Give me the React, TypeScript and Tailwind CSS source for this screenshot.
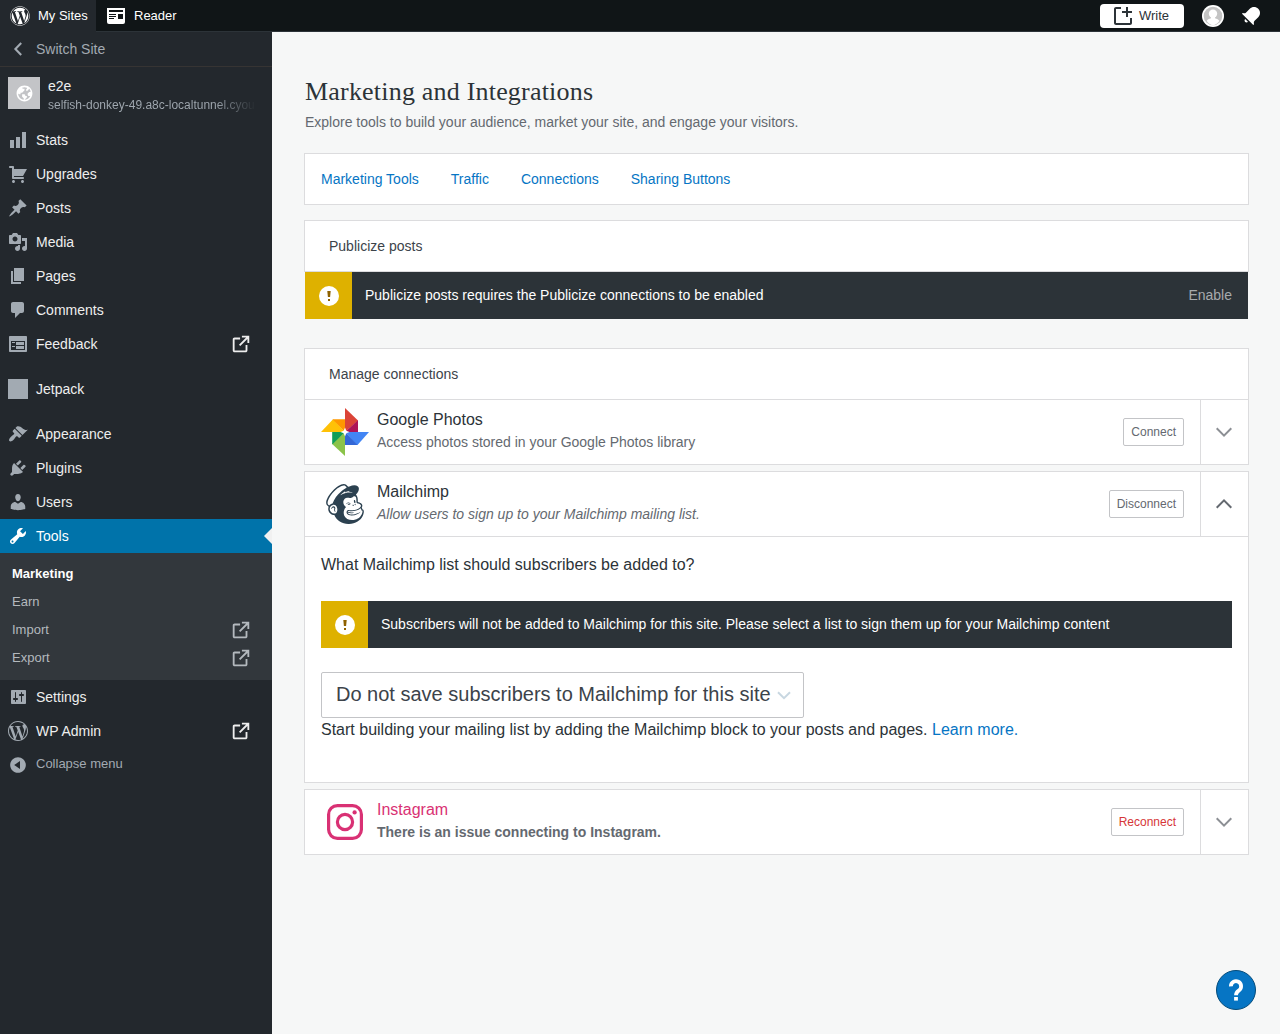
import React from 'react';
import { FaWordpress } from 'react-icons/fa';
import { SiMailchimp, SiWordpress } from 'react-icons/si';

const ICONS = {
  stats: 'M18 18V2h-4v16h4zm-6 0V7H8v11h4zm-6 0v-8H2v8h4z',
  cart: 'M6 13h9c.55 0 1 .45 1 1s-.45 1-1 1H5c-.55 0-1-.45-1-1V4H2c-.55 0-1-.45-1-1s.45-1 1-1h3c.55 0 1 .45 1 1v2h13l-4 7H6v1zm-.5 3c.83 0 1.5.67 1.5 1.5S6.33 19 5.5 19 4 18.33 4 17.5 4.67 16 5.5 16zm9 0c.83 0 1.5.67 1.5 1.5s-.67 1.5-1.5 1.5-1.5-.67-1.5-1.5.67-1.5 1.5-1.5z',
  pin: 'M10.44 3.02l1.82-1.82 6.36 6.35-1.83 1.82c-1.05-.68-2.48-.57-3.41.36l-.75.75c-.92.93-1.04 2.35-.35 3.41l-1.83 1.82-2.41-2.41-2.8 2.79c-.42.42-3.38 2.71-3.8 2.29s1.86-3.39 2.28-3.81l2.79-2.79L4.1 9.36l1.83-1.82c1.05.69 2.48.57 3.4-.36l.75-.75c.93-.92 1.05-2.35.36-3.41z',
  media: 'M13 11V4c0-.55-.45-1-1-1h-1.67L9 1H5L3.67 3H2c-.55 0-1 .45-1 1v7c0 .55.45 1 1 1h10c.55 0 1-.45 1-1zM7 4.5c1.38 0 2.5 1.12 2.5 2.5S8.38 9.5 7 9.5 4.5 8.38 4.5 7 5.62 4.5 7 4.5zM14 6h5v10.5c0 1.38-1.12 2.5-2.5 2.5S14 17.88 14 16.5s1.12-2.5 2.5-2.5c.17 0 .34.02.5.05V9h-3V6zm-4 8.05V13h2v3.5c0 1.38-1.12 2.5-2.5 2.5S7 17.88 7 16.5 8.12 14 9.5 14c.17 0 .34.02.5.05z',
  pages: 'M6 15V2h10v13H6zm-1 1h8v2H3V5h2v11z',
  comments: 'M5 2h9c1.1 0 2 .9 2 2v7c0 1.1-.9 2-2 2h-2l-5 5v-5H5c-1.1 0-2-.9-2-2V4c0-1.1.9-2 2-2z',
  feedback: 'M2 2h16c.55 0 1 .45 1 1v14c0 .55-.45 1-1 1H2c-.55 0-1-.45-1-1V3c0-.55.45-1 1-1zm15 14V7H3v9h14zM4 8v1h3V8H4zm4 0v3h8V8H8zm-4 4v1h3v-1H4zm4 0v3h8v-3H8z',
  appearance: 'M14.48 11.06L7.41 3.99l1.5-1.5c.5-.56 2.3-.47 3.51.32 1.21.8 1.43 1.28 2.91 2.1 1.18.64 2.45 1.26 4.45.85zm-.71.71L6.7 4.7 4.93 6.47c-.39.39-.39 1.02 0 1.41l1.06 1.06c.39.39.39 1.03 0 1.42-.6.6-1.43 1.11-2.21 1.69-.35.26-.7.53-1.01.84C1.43 14.23.4 16.08 1.4 17.07c.99 1 2.84-.03 4.18-1.36.31-.31.58-.66.85-1.02.57-.78 1.08-1.61 1.69-2.21.39-.39 1.02-.39 1.41 0l1.06 1.06c.39.39 1.02.39 1.41 0z',
  plugins: 'M13.11 4.36L9.87 7.6 8 5.73l3.24-3.24c.35-.34 1.05-.2 1.56.32.52.51.66 1.21.31 1.55zm-8 1.77l.91-1.12 9.01 9.01-1.19.84c-.71.71-2.63 1.16-3.82 1.16H6.14L4.9 17.26c-.59.59-1.54.59-2.12 0-.59-.58-.59-1.53 0-2.12l1.24-1.24v-3.88c0-1.13.4-3.19 1.09-3.89zm7.26 3.97l3.24-3.24c.34-.35 1.04-.21 1.55.31.52.51.66 1.21.31 1.55l-3.24 3.25z',
  users: 'M10 9.25c-2.27 0-2.73-3.44-2.73-3.44C7 4.02 7.82 2 9.97 2c2.16 0 2.98 2.02 2.71 3.81 0 0-.41 3.44-2.68 3.44zm0 2.57L12.72 10c2.39 0 4.52 2.33 4.52 4.53v2.49s-3.65 1.13-7.24 1.13c-3.65 0-7.24-1.13-7.24-1.13v-2.49c0-2.25 1.94-4.48 4.47-4.48z',
  tools: 'M16.68 9.77c-1.34 1.34-3.3 1.67-4.95.99l-5.41 6.52c-.99.99-2.59.99-3.58 0s-.99-2.59 0-3.57l6.52-5.42c-.68-1.65-.35-3.61.99-4.95 1.28-1.28 3.12-1.62 4.72-1.06l-2.89 2.89 2.82 2.82 2.86-2.87c.53 1.58.18 3.39-1.08 4.65zM3.81 16.21c.4.39 1.04.39 1.43 0 .4-.4.4-1.04 0-1.43-.39-.4-1.03-.4-1.43 0-.39.39-.39 1.03 0 1.43z',
  settings: 'M18 16V4c0-.55-.45-1-1-1H4c-.55 0-1 .45-1 1v12c0 .55.45 1 1 1h13c.55 0 1-.45 1-1zM8 11h1c.55 0 1 .45 1 1s-.45 1-1 1H8v1.5c0 .28-.22.5-.5.5s-.5-.22-.5-.5V13H6c-.55 0-1-.45-1-1s.45-1 1-1h1V5.5c0-.28.22-.5.5-.5s.5.22.5.5V11zm5-2h-1c-.55 0-1-.45-1-1s.45-1 1-1h1V5.5c0-.28.22-.5.5-.5s.5.22.5.5V7h1c.55 0 1 .45 1 1s-.45 1-1 1h-1v5.5c0 .28-.22.5-.5.5s-.5-.22-.5-.5V9z',
  collapse: 'M10 2.16c4.33 0 7.84 3.51 7.84 7.84s-3.51 7.84-7.84 7.84S2.16 14.33 2.16 10 5.71 2.16 10 2.16zm2 11.72V6.12L6.18 9.97z',
};

type IconName = keyof typeof ICONS;

function MenuIcon({ name }: { name: IconName }) {
  return (
    <svg viewBox="0 0 20 20" className="size-5 shrink-0 fill-current">
      <path d={ICONS[name]} />
    </svg>
  );
}

function External() {
  return (
    <svg viewBox="0 0 24 24" className="ml-auto size-[22px] shrink-0 fill-current">
      <path d="M19 13v6c0 1.105-.895 2-2 2H5c-1.105 0-2-.895-2-2V7c0-1.105.895-2 2-2h6v2H5v12h12v-6h2zM13 3v2h4.586l-7.793 7.793 1.414 1.414L19 6.414V11h2V3h-8z" />
    </svg>
  );
}

function Chevron({ className }: { className: string }) {
  return (
    <svg viewBox="0 0 24 24" className={className}>
      <path d="M20 9l-8 8-8-8 1.414-1.414L12 14.172l6.586-6.586z" />
    </svg>
  );
}

function MenuItem({ name, label, external }: { name?: IconName; label: string; external?: boolean }) {
  return (
    <li className="flex h-[34px] items-center pr-5 pl-2 text-[#eeeeee]">
      <span className="mr-2 flex text-[#a2aab2]">
        {name ? <MenuIcon name={name} /> : label === 'Jetpack' ? <span className="size-5 bg-[#a2aab2]" /> : <SiWordpress className="size-5" />}
      </span>
      {label}
      {external && <External />}
    </li>
  );
}

function SubItem({ label, external, active }: { label: string; external?: boolean; active?: boolean }) {
  return (
    <li className={`flex h-7 items-center pr-5 pl-3 text-[13px] ${active ? 'font-bold text-white' : 'text-[#b4b9be]'}`}>
      {label}
      {external && <External />}
    </li>
  );
}

function Header() {
  return (
    <header className="flex h-8 bg-[#101517] text-[13px] text-white">
      <div className="flex w-24 items-center bg-[#23282d] pl-[10px]">
        <FaWordpress className="mr-2 size-5" />
        My Sites
      </div>
      <div className="flex flex-1 items-center border-b border-[#2c3338] pl-[11px]">
        <svg viewBox="0 0 18 16" className="mr-[9px] h-4 w-[18px]">
          <path fill="#fff" d="M0 0h18v14a2 2 0 0 1-2 2H2a2 2 0 0 1-2-2z" />
          <path fill="#101517" d="M2 2h14v2H2zM2 6h7v1H2zM2 8h7v1H2zM2 10h5v1H2zM11 6h5v5h-5z" />
        </svg>
        Reader
        <div className="ml-auto flex h-6 w-21 items-center rounded bg-white pl-[11px] text-[#2c3338]">
          <svg viewBox="0 0 24 24" className="mr-1 size-6 fill-current">
            <path d="M21 14v5c0 1.105-.895 2-2 2H5c-1.105 0-2-.895-2-2V5c0-1.105.895-2 2-2h5v2H5v14h14v-5h2z" />
            <path d="M21 7h-4V3h-2v4h-4v2h4v4h2V9h4z" />
          </svg>
          Write
        </div>
        <svg viewBox="0 0 22 22" className="mr-[15px] ml-[18px] size-[22px]">
          <circle cx="11" cy="11" r="11" fill="#fff" />
          <circle cx="11" cy="11" r="9.3" fill="#c4c4c4" />
          <circle cx="11" cy="8.8" r="4.2" fill="#fff" />
          <path fill="#fff" d="M9 11h4v2.300c2 .4 3.600 1.200 4.300 2.700A9.300 9.300 0 0 1 11 20.300 9.300 9.300 0 0 1 4.700 16c.7-1.500 2.300-2.300 4.300-2.700z" />
        </svg>
        <svg viewBox="0 0 24 24" className="mr-[17px] size-6 fill-white">
          <path d="M6.140 14.970l2.828 2.827c-.362.362-.862.586-1.414.586-1.105 0-2-.895-2-2 0-.552.224-1.052.586-1.414zm8.867 5.324L14.300 21 3 9.700l.706-.707 1.102.157c.754.108 1.690-.122 2.077-.510l3.885-3.884c2.340-2.340 6.135-2.340 8.475 0s2.340 6.135 0 8.475l-3.885 3.886c-.388.388-.618 1.323-.510 2.077l.157 1.100z" />
        </svg>
      </div>
    </header>
  );
}

function Sidebar() {
  return (
    <aside className="w-68 shrink-0 bg-[#23282d] text-[14px]">
      <div className="flex h-[35px] items-center border-b border-[#363433] pl-[9px] text-[#a2aab2]">
        <svg viewBox="0 0 18 18" className="mr-[9px] size-[18px]" fill="none" stroke="currentColor" strokeWidth="2.100">
          <path d="M12.200 3L6.400 9l5.800 6" />
        </svg>
        Switch Site
      </div>
      <div className="flex h-14 pt-[10px] pl-2">
        <div className="flex size-8 items-center justify-center bg-[#c3c4c7]">
          <svg viewBox="0 0 24 24" className="size-[19px] fill-white">
            <path d="M12 2C6.477 2 2 6.477 2 12s4.477 10 10 10 10-4.477 10-10S17.523 2 12 2zm0 18l2-2 1-1v-2h-2v-1l-1-1H9v3l2 2v1.931C7.060 19.436 4 16.072 4 12l1 1h2v-2h2l3-3V6h-2L9 5v-.411a7.945 7.945 0 016 0V6l-1 1v1l1 1 3.130-3.130A7.983 7.983 0 0119.736 10H18l-2 2v2l1 1h2l.286.286C18.029 18.061 15.239 20 12 20z" />
          </svg>
        </div>
        <div className="ml-2 w-[208px] whitespace-nowrap">
          <div className="h-[18px] leading-[18px] text-[#eeeeee]">e2e</div>
          <div className="h-5 overflow-hidden bg-linear-to-r from-[#a2aab2] from-80% to-[#23282d] to-100% bg-clip-text text-[12px] leading-5 text-transparent">
            selfish-donkey-49.a8c-localtunnel.cyou
          </div>
        </div>
      </div>
      <ul>
        <MenuItem name="stats" label="Stats" />
        <MenuItem name="cart" label="Upgrades" />
        <MenuItem name="pin" label="Posts" />
        <MenuItem name="media" label="Media" />
        <MenuItem name="pages" label="Pages" />
        <MenuItem name="comments" label="Comments" />
        <MenuItem name="feedback" label="Feedback" external />
      </ul>
      <ul className="py-[11px]">
        <MenuItem label="Jetpack" />
      </ul>
      <ul>
        <MenuItem name="appearance" label="Appearance" />
        <MenuItem name="plugins" label="Plugins" />
        <MenuItem name="users" label="Users" />
        <li className="flex h-[34px] items-center bg-[#0073aa] pl-2 text-white">
          <span className="mr-2">
            <MenuIcon name="tools" />
          </span>
          Tools
          <span className="ml-auto border-y-8 border-r-8 border-y-transparent border-r-[#f1f1f1]" />
        </li>
      </ul>
      <ul className="bg-[#32373c] pt-[7px] pb-2">
        <SubItem label="Marketing" active />
        <SubItem label="Earn" />
        <SubItem label="Import" external />
        <SubItem label="Export" external />
      </ul>
      <ul>
        <MenuItem name="settings" label="Settings" />
        <MenuItem label="WP Admin" external />
        <li className="flex h-[34px] items-center pl-2 text-[13px] text-[#a2aab2]">
          <MenuIcon name="collapse" />
          <span className="-mt-[3px] ml-2">Collapse menu</span>
        </li>
      </ul>
    </aside>
  );
}

function Notice({ text, action }: { text: string; action?: string }) {
  return (
    <div className="flex h-[47px] items-center bg-[#2c3338] pr-4 text-[14px] text-white">
      <div className="mr-[13px] flex h-full w-[47px] items-center justify-center bg-[#deb100]">
        <svg viewBox="0 0 20 20" className="mt-px ml-px size-5">
          <circle cx="10" cy="10" r="10" fill="#fff" />
          <path fill="#8f6200" d="M8.300 5h3.400l-.6 6H8.900zM9 13h2v2H9z" />
        </svg>
      </div>
      <span className="-mt-px">{text}</span>
      {action && <span className="-mt-px ml-auto text-[#a7aaad]">{action}</span>}
    </div>
  );
}

function PhotosLogo() {
  return (
    <svg viewBox="0 0 48 48" className="size-12">
      <path fill="#db4437" d="M24 0l13 12.500v.3L24 24z" />
      <path fill="#ad1457" d="M37 12.200V24H24z" />
      <path fill="#4285f4" d="M48 24L36.500 37h-.8L24 24z" />
      <path fill="#3367d6" d="M36.500 37H24V24z" />
      <path fill="#8bc34a" d="M24 48L11.200 36v-.5L24 24z" />
      <path fill="#0f9d58" d="M11.200 36.500V24H24z" />
      <path fill="#ffc107" d="M0 24l11.800-12.600h.6L24 24z" />
      <path fill="#ff9800" d="M11.500 11.200H24V24z" />
      <path fill="#fff" d="M24 19.500l1.300 3.200L28.500 24l-3.200 1.300L24 28.500l-1.300-3.200L19.500 24l3.200-1.300z" />
    </svg>
  );
}

function InstagramLogo() {
  return (
    <svg viewBox="0 0 36 36" className="size-9" fill="none" stroke="#d93174" strokeWidth="3.200">
      <rect x="1.600" y="1.600" width="32.800" height="32.800" rx="8.800" />
      <circle cx="18" cy="18" r="7.600" />
      <circle cx="27.600" cy="8.400" r="2.150" fill="#d93174" stroke="none" />
    </svg>
  );
}

type ServiceProps = {
  logo: React.ReactNode;
  title: string;
  titleClass?: string;
  desc: string;
  descClass?: string;
  action: string;
  actionClass?: string;
  open?: boolean;
};

function ServiceRow({ logo, title, titleClass = 'text-[#2c3338]', desc, descClass = '', action, actionClass = 'text-[#646970]', open }: ServiceProps) {
  return (
    <div className="flex h-16 items-center pl-4">
      <div className="flex size-12 items-center justify-center">{logo}</div>
      <div className="ml-2 pb-[3px]">
        <div className={`h-6 text-[16px] leading-6 ${titleClass}`}>{title}</div>
        <div className={`h-[21px] text-[14px] leading-[21px] text-[#646970] ${descClass}`}>{desc}</div>
      </div>
      <button className={`mr-4 ml-auto h-7 rounded-[2px] border border-[#c3c4c7] px-[7px] text-[12px] ${actionClass}`}>{action}</button>
      <div className="flex h-full w-12 items-center justify-center border-l border-[#dcdcde] pr-px">
        <Chevron className={open ? 'size-6 rotate-180 fill-[#646970]' : 'size-6 fill-[#8c8f94]'} />
      </div>
    </div>
  );
}

function Main() {
  return (
    <main className="flex-1 bg-[#f6f7f7] pt-11 pr-[31px] pl-8">
      <div className="pl-px">
        <h1 className="h-8 font-['Liberation_Serif',serif] text-[26px] leading-[31px] tracking-[0.2px] whitespace-nowrap text-[#2c3338]">Marketing and Integrations</h1>
        <p className="h-[45px] pt-1 text-[14px] leading-[21px] text-[#646970]">Explore tools to build your audience, market your site, and engage your visitors.</p>
      </div>
      <nav className="flex h-[52px] items-center gap-8 border border-[#dcdcde] bg-white px-4 text-[14px] text-[#0675c4]">
        <a>Marketing Tools</a>
        <a>Traffic</a>
        <a>Connections</a>
        <a>Sharing Buttons</a>
      </nav>
      <h2 className="mt-[15px] flex h-[52px] items-center border border-[#dcdcde] bg-white px-6 text-[14px] text-[#3c434a]">Publicize posts</h2>
      <div className="px-px">
        <Notice text="Publicize posts requires the Publicize connections to be enabled" action="Enable" />
      </div>
      <h2 className="mt-[29px] flex h-[52px] items-center border border-[#dcdcde] bg-white px-6 text-[14px] text-[#3c434a]">Manage connections</h2>
      <section className="border border-t-0 border-[#dcdcde] bg-white">
        <ServiceRow logo={<PhotosLogo />} title="Google Photos" desc="Access photos stored in your Google Photos library" action="Connect" />
      </section>
      <section className="mt-[6px] h-[312px] border border-[#dcdcde] bg-white">
        <ServiceRow logo={<SiMailchimp className="size-10 text-[#2c4150]" />} title="Mailchimp" desc="Allow users to sign up to your Mailchimp mailing list." descClass="italic" action="Disconnect" open />
        <div className="border-t border-[#dcdcde] px-4 pt-4 text-[16px] leading-6 text-[#2c3338]">
          <p className="mb-6">What Mailchimp list should subscribers be added to?</p>
          <Notice text="Subscribers will not be added to Mailchimp for this site. Please select a list to sign them up for your Mailchimp content" />
          <div className="mt-6 flex h-[46px] w-[483px] items-center rounded-[2px] border border-[#c3c4c7] pb-[2px] pl-[14px] text-[20px] whitespace-nowrap text-[#3c434a]">
            Do not save subscribers to Mailchimp for this site
            <svg viewBox="0 0 20 20" className="mt-px ml-[3px] size-5 shrink-0" fill="none" stroke="#c8d7e1" strokeWidth="2">
              <path d="M4 7.200l6 6 6-6" />
            </svg>
          </div>
          <p>
            Start building your mailing list by adding the Mailchimp block to your posts and pages. <a className="text-[#0675c4]">Learn more.</a>
          </p>
        </div>
      </section>
      <section className="mt-[6px] border border-[#dcdcde] bg-white">
        <ServiceRow logo={<InstagramLogo />} title="Instagram" titleClass="text-[#d93174]" desc="There is an issue connecting to Instagram." descClass="font-bold" action="Reconnect" actionClass="text-[#d63638]" />
      </section>
    </main>
  );
}

export default function App() {
  return (
    <div className="flex h-[1034px] w-[1280px] flex-col overflow-hidden font-['Liberation_Sans',Arial,sans-serif]">
      <Header />
      <div className="flex flex-1">
        <Sidebar />
        <Main />
      </div>
      <button className="absolute top-[970px] left-[1216px] flex size-10 items-center justify-center rounded-full border border-[#044b7a] bg-[#0675c4]">
        <svg viewBox="0 0 24 24" className="size-6" fill="none" stroke="#fff" strokeWidth="3.800">
          <path d="M6.900 8.400A5.100 5.100 0 1 1 14.700 12.600C12.600 14 12 14.600 12 17.300" />
          <path fill="#fff" stroke="none" d="M10.100 19h3.800v3.600h-3.800z" />
        </svg>
      </button>
    </div>
  );
}
